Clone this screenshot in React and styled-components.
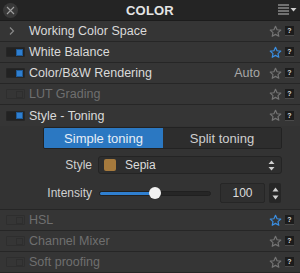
import React from 'react';
import styled, { createGlobalStyle } from 'styled-components';

const Global = createGlobalStyle`
    html, body {
        margin: 0;
        padding: 0;
        background: #333;
    }
    * {
        box-sizing: border-box;
    }
`;

const Panel = styled.div`
    width: 300px;
    height: 273px;
    overflow: hidden;
    background: #343434;
    font-family: "Liberation Sans", Arial, sans-serif;
    color: #dcdcdc;
`;

const Header = styled.div`
    height: 21px;
    display: grid;
    grid-template-columns: 40px 1fr 40px;
    align-items: center;
    background: #242424;
    border-bottom: 1px solid #1c1c1c;
`;

const CloseButton = styled.div`
    width: 15px;
    height: 15px;
    margin-left: 3px;
    border-radius: 50%;
    background: #393939;
    display: flex;
    align-items: center;
    justify-content: center;
`;

const Title = styled.div`
    text-align: center;
    font-size: 13px;
    font-weight: bold;
    color: #e4e4e4;
    letter-spacing: 0.2px;
`;

const MenuButton = styled.div`
    display: flex;
    justify-content: flex-end;
    padding-right: 3px;
`;

const Row = styled.div`
    height: 21px;
    display: flex;
    align-items: center;
    padding: 0 6px 0 6px;
    background: #353535;
    border-bottom: ${p => (p.$last ? 'none' : '1px solid #262626')};
    color: ${p => (p.$off ? '#6f6f6f' : '#dadada')};
    font-size: 12.5px;
`;

const Lead = styled.div`
    width: 23px;
    flex: none;
    display: flex;
    align-items: center;
`;

const Toggle = styled.div`
    width: 19px;
    height: 10px;
    border-radius: 1px;
    background: ${p => (p.$on ? '#222' : 'transparent')};
    border: 1px solid ${p => (p.$on ? '#262626' : '#2e2e2e')};
    display: flex;
    justify-content: flex-end;
    align-items: center;
    padding-right: 1px;
`;

const ToggleKnob = styled.div`
    width: 7px;
    height: 7px;
    background: ${p => (p.$on ? '#2f7fd0' : 'transparent')};
    border: 1px solid ${p => (p.$on ? '#1f5a96' : '#2e2e2e')};
`;

const Label = styled.div`
    flex: 1;
    white-space: nowrap;
`;

const Value = styled.div`
    color: #a8a8a8;
    font-size: 12.5px;
    margin-right: 9px;
`;

const Star = styled.svg`
    width: 13px;
    height: 13px;
    flex: none;
    margin-right: 3px;
`;

const Help = styled.div`
    width: 9px;
    height: 10px;
    flex: none;
    background: #1c1c1c;
    border-bottom: 1px solid #4a4a4a;
    color: #ddd;
    font-size: 7px;
    font-weight: bold;
    display: flex;
    align-items: center;
    justify-content: center;
    line-height: 1;
`;

const Expanded = styled.div`
    background: #333;
    border-bottom: 1px solid #262626;
    padding: 1px 18px 7px 43px;
    height: 84px;
`;

const Segments = styled.div`
    display: grid;
    grid-template-columns: 119px 1fr;
    height: 22px;
    border: 1px solid #222;
    border-radius: 2px;
    overflow: hidden;
`;

const Segment = styled.div`
    display: flex;
    align-items: center;
    justify-content: center;
    font-size: 13px;
    background: ${p => (p.$active ? '#2b78c2' : '#2d2d2d')};
    color: ${p => (p.$active ? '#e6eef7' : '#cfcfcf')};
`;

const Field = styled.div`
    display: flex;
    align-items: center;
    margin-top: ${p => p.$top}px;
    height: ${p => p.$h}px;
`;

const FieldLabel = styled.div`
    width: 49px;
    text-align: right;
    font-size: 12px;
    color: #d0d0d0;
    margin-right: 6px;
    flex: none;
`;

const Select = styled.div`
    flex: 1;
    height: 18px;
    display: flex;
    align-items: center;
    background: #2e2e2e;
    border: 1px solid #242424;
    border-radius: 3px;
    padding: 0 6px 0 5px;
    font-size: 12px;
    color: #dcdcdc;
`;

const Swatch = styled.div`
    width: 12px;
    height: 12px;
    border-radius: 2px;
    background: #a67a3d;
    margin-right: 9px;
`;

const Track = styled.div`
    position: relative;
    width: 112px;
    height: 5px;
    margin-left: 1px;
    border-radius: 3px;
    background: #262626;
    border: 1px solid #202020;
    flex: none;
`;

const Fill = styled.div`
    height: 100%;
    border-radius: 3px;
    background: #2f7fd0;
`;

const Knob = styled.div`
    position: absolute;
    top: -5px;
    width: 12px;
    height: 12px;
    border-radius: 50%;
    background: #f2f2f2;
    margin-left: -6px;
`;

const NumberBox = styled.div`
    width: 45px;
    height: 20px;
    margin-left: 9px;
    background: #2f2f2f;
    border: 1px solid #262626;
    border-radius: 2px;
    display: flex;
    align-items: center;
    justify-content: center;
    font-size: 12px;
    color: #dcdcdc;
    flex: none;
`;

const Stepper = styled.div`
    width: 12px;
    height: 20px;
    margin-left: 4px;
    background: #262626;
    border-radius: 2px;
    display: flex;
    flex-direction: column;
    align-items: center;
    justify-content: space-around;
    padding: 2px 0;
    flex: none;
`;

const StarIcon = ({ blue }) => (
    <Star viewBox="0 0 24 24">
        <path
            d="M12 2.5l2.9 6.3 6.8.7-5.1 4.6 1.5 6.7L12 17.3l-6.1 3.5 1.5-6.7-5.1-4.6 6.8-.7z"
            fill="none"
            stroke={blue ? '#3a8fe3' : '#747474'}
            strokeWidth="2.2"
            strokeLinejoin="round"
        />
    </Star>
);

const Tail = ({ blue, value }) => (
    <>
        {value && <Value>{value}</Value>}
        <StarIcon blue={blue} />
        <Help>?</Help>
    </>
);

const ToggleBox = ({ on }) => (
    <Toggle $on={on}>
        <ToggleKnob $on={on} />
    </Toggle>
);

const Section = ({ label, on, off, blue, value, chevron, last }) => (
    <Row $off={off} $last={last}>
        <Lead>
            {chevron ? (
                <svg width="8" height="10" viewBox="0 0 8 10" style={{ marginLeft: 2 }}>
                    <path d="M2 1.5l3.5 3.5L2 8.5" fill="none" stroke="#8a8a8a" strokeWidth="1.2" />
                </svg>
            ) : (
                <ToggleBox on={on} />
            )}
        </Lead>
        <Label>{label}</Label>
        <Tail blue={blue} value={value} />
    </Row>
);

export default function App() {
    return (
        <Panel>
            <Global />
            <Header>
                <CloseButton>
                    <svg width="9" height="9" viewBox="0 0 9 9">
                        <path d="M1 1l7 7M8 1L1 8" stroke="#a0a0a0" strokeWidth="1.1" />
                    </svg>
                </CloseButton>
                <Title>COLOR</Title>
                <MenuButton>
                    <svg width="19" height="12" viewBox="0 0 19 12">
                        <path d="M0 1h11M0 4h11M0 7h11M0 10h11" stroke="#bdbdbd" strokeWidth="1.2" />
                        <path d="M12.5 4h6l-3 3.5z" fill="#cfcfcf" />
                    </svg>
                </MenuButton>
            </Header>
            <Section label="Working Color Space" chevron />
            <Section label="White Balance" on blue />
            <Section label="Color/B&W Rendering" on value="Auto" />
            <Section label="LUT Grading" off />
            <Section label="Style - Toning" on last />
            <Expanded>
                <Segments>
                    <Segment $active>Simple toning</Segment>
                    <Segment>Split toning</Segment>
                </Segments>
                <Field $top={7} $h={18}>
                    <FieldLabel>Style</FieldLabel>
                    <Select>
                        <Swatch />
                        <span style={{ flex: 1 }}>Sepia</span>
                        <svg width="7" height="11" viewBox="0 0 7 11">
                            <path d="M3.5 0.5L6.5 4H0.5zM3.5 10.5L6.5 7H0.5z" fill="#cfcfcf" />
                        </svg>
                    </Select>
                </Field>
                <Field $top={9} $h={20}>
                    <FieldLabel>Intensity</FieldLabel>
                    <Track>
                        <Fill style={{ width: '50%' }} />
                        <Knob style={{ left: '50%' }} />
                    </Track>
                    <NumberBox>100</NumberBox>
                    <Stepper>
                        <svg width="7" height="5" viewBox="0 0 7 5">
                            <path d="M3.5 0.5L6.5 4.5H0.5z" fill="#cfcfcf" />
                        </svg>
                        <svg width="7" height="5" viewBox="0 0 7 5">
                            <path d="M3.5 4.5L6.5 0.5H0.5z" fill="#cfcfcf" />
                        </svg>
                    </Stepper>
                </Field>
            </Expanded>
            <Section label="HSL" off blue />
            <Section label="Channel Mixer" off />
            <Section label="Soft proofing" off />
        </Panel>
    );
}
